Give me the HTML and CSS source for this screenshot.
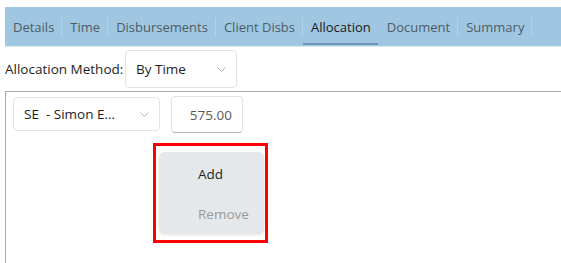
FILE: index.html
```html
<!DOCTYPE html>
<html lang="en">
<head>
    <meta charset="UTF-8">
    <meta name="viewport" content="width=device-width, initial-scale=1.0">
    <title>Allocation</title>
    <link rel="stylesheet" href="styles.css">
</head>
<body>
    <div class="tabbar">
        <span class="tab">Details</span><span class="sep"></span>
        <span class="tab">Time</span><span class="sep"></span>
        <span class="tab">Disbursements</span><span class="sep"></span>
        <span class="tab">Client Disbs</span><span class="sep"></span>
        <span class="tab active">Allocation</span><span class="sep hidden"></span>
        <span class="tab">Document</span><span class="sep"></span>
        <span class="tab">Summary</span><span class="sep"></span>
    </div>
    <div class="method-row">
        <label>Allocation Method:</label>
        <div class="select method-select">
            <span>By Time</span>
            <svg class="chevron" width="9" height="5" viewBox="0 0 9 5"><path d="M0.5 0.5 L4.5 4.5 L8.5 0.5" fill="none" stroke="#b5b5b5" stroke-width="1"/></svg>
        </div>
    </div>
    <div class="panel">
        <div class="alloc-row">
            <div class="select fee-select">
                <span>SE&nbsp; - Simon E...</span>
                <svg class="chevron" width="9" height="5" viewBox="0 0 9 5"><path d="M0.5 0.5 L4.5 4.5 L8.5 0.5" fill="none" stroke="#b5b5b5" stroke-width="1"/></svg>
            </div>
            <div class="amount">575.00</div>
        </div>
        <div class="highlight">
            <div class="menu">
                <div class="menu-item">Add</div>
                <div class="menu-item disabled">Remove</div>
            </div>
        </div>
    </div>
</body>
</html>
```

FILE: styles.css
```css
body {
    font-family: "Open Sans", "Noto Sans", sans-serif;
    font-size: 13.5px;
    color: #1e1e1e;
    background: #fff;
    margin: 0;
}
.tabbar {
    display: flex;
    align-items: center;
    height: 39px;
    margin: 7px 0 0 5px;
    background: #9fc7e1;
    border-bottom: 1px solid #e4ebf0;
    font-size: 13px;
}
.tab {
    display: flex;
    align-items: center;
    height: 100%;
    padding: 0 7px 0 8px;
    color: #4e5b66;
    box-sizing: border-box;
}
.tab.active {
    color: #1a1a1a;
    background: linear-gradient(#6b98b8, #6b98b8) no-repeat 0 calc(100% - 1px) / 100% 2px;
}
.sep {
    width: 1px;
    height: 18px;
    background: #b3d3e8;
}
.sep.hidden {
    background: transparent;
}
.method-row {
    display: flex;
    align-items: center;
    height: 44px;
    padding-left: 5px;
}
.method-row label {
    width: 120px;
}
.select {
    display: flex;
    align-items: center;
    justify-content: space-between;
    box-sizing: border-box;
    border: 1px solid #e3e3e3;
    border-radius: 4px;
    background: #fff;
}
.method-select {
    width: 112px;
    height: 38px;
    padding: 0 10px 0 10px;
}
.panel {
    margin-left: 5px;
    height: 172px;
    border-top: 1px solid #a9a9a9;
    border-left: 1px solid #a9a9a9;
}
.alloc-row {
    display: flex;
    align-items: flex-start;
    padding: 5px 0 0 7px;
}
.fee-select {
    width: 147px;
    height: 34px;
    padding: 0 10px 0 10px;
}
.amount {
    margin: -1px 0 0 11px;
    width: 72px;
    height: 37px;
    box-sizing: border-box;
    border: 1px solid #e3e3e3;
    border-bottom-color: #b8b8b8;
    border-radius: 4px;
    padding-right: 10px;
    display: flex;
    align-items: center;
    justify-content: flex-end;
    color: #5a5a5a;
}
.highlight {
    width: 115px;
    height: 100px;
    box-sizing: border-box;
    margin: 10px 0 0 147px;
    border: 3px solid #ff0000;
    padding: 6px 1px 0 3px;
}
.menu {
    height: 82px;
    background: #e5e8eb;
    border-radius: 6px;
    box-shadow: 0 1px 3px rgba(0, 0, 0, 0.12);
    padding-top: 2px;
    box-sizing: border-box;
}
.menu-item {
    height: 40px;
    display: flex;
    align-items: center;
    padding-left: 39px;
}
.menu-item.disabled {
    color: #9a9a9a;
}
```
